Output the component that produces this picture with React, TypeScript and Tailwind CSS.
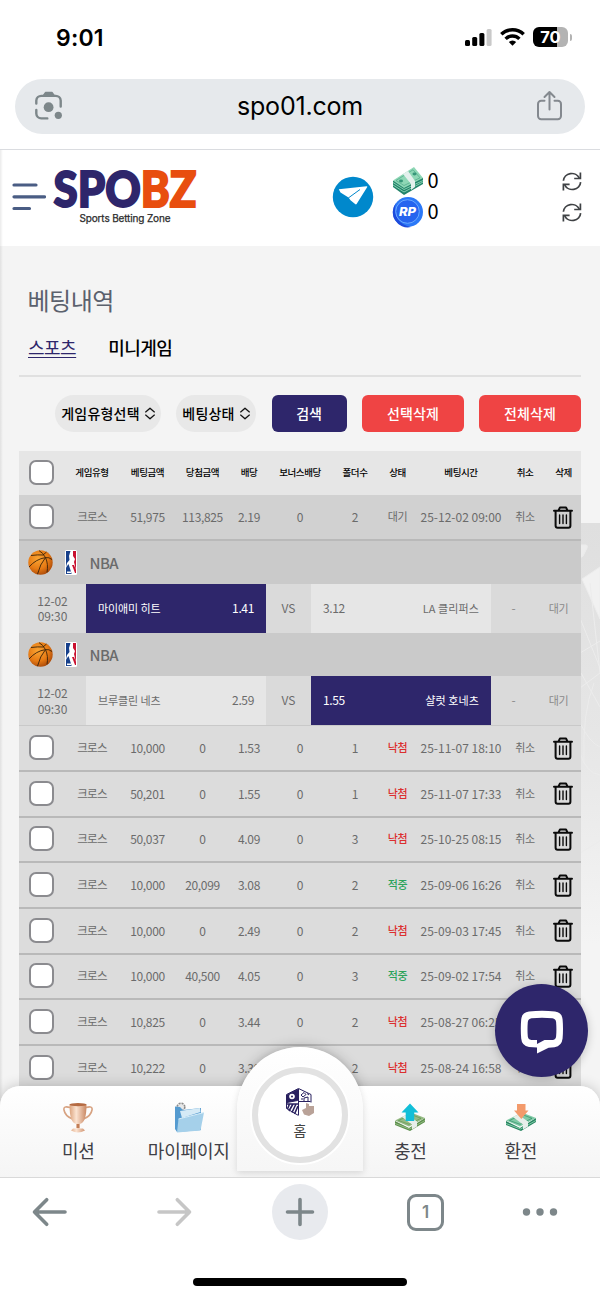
import { ReactNode } from 'react';

type Bet = { amount: string; win: string; odds: string; folders: number; status: string; time: string };
type Match = { home: string; homeOdds: string; away: string; awayOdds: string; picked: 'home' | 'away' };

const openBet: Bet = { amount: '51,975', win: '113,825', odds: '2.19', folders: 2, status: '대기', time: '25-12-02 09:00' };

const matches: Match[] = [
  { home: '마이애미 히트', homeOdds: '1.41', away: 'LA 클리퍼스', awayOdds: '3.12', picked: 'home' },
  { home: '브루클린 네츠', homeOdds: '2.59', away: '샬럿 호네츠', awayOdds: '1.55', picked: 'away' },
];

const bets: Bet[] = [
  { amount: '10,000', win: '0', odds: '1.53', folders: 1, status: '낙첨', time: '25-11-07 18:10' },
  { amount: '50,201', win: '0', odds: '1.55', folders: 1, status: '낙첨', time: '25-11-07 17:33' },
  { amount: '50,037', win: '0', odds: '4.09', folders: 3, status: '낙첨', time: '25-10-25 08:15' },
  { amount: '10,000', win: '20,099', odds: '3.08', folders: 2, status: '적중', time: '25-09-06 16:26' },
  { amount: '10,000', win: '0', odds: '2.49', folders: 2, status: '낙첨', time: '25-09-03 17:45' },
  { amount: '10,000', win: '40,500', odds: '4.05', folders: 3, status: '적중', time: '25-09-02 17:54' },
  { amount: '10,825', win: '0', odds: '3.44', folders: 2, status: '낙첨', time: '25-08-27 06:25' },
  { amount: '10,222', win: '0', odds: '3.39', folders: 2, status: '낙첨', time: '25-08-24 16:58' },
];

const columns = ['게임유형', '베팅금액', '당첨금액', '배당', '보너스배당', '폴더수', '상태', '베팅시간', '취소', '삭제'];
const GRID = 'grid grid-cols-[44px_58px_53px_57px_36px_66px_44px_41px_86px_42px_35px] items-center text-center whitespace-nowrap';

export default function App() {
  return (
    <div className="w-[600px] h-[1298px] overflow-hidden flex flex-col bg-white font-['Noto_Sans_CJK_KR',sans-serif]">
      <StatusBar />
      <AddressBar />
      <main className="relative h-[1027px] shrink-0 overflow-hidden bg-[#f4f4f4]">
        <Backdrop />
        <SiteHeader />
        <History />
        <div className="absolute inset-y-0 left-0 w-[3px] bg-linear-to-r from-black/8 to-transparent" />
        <ChatButton />
        <SiteNav />
      </main>
      <BrowserBar />
    </div>
  );
}

function StatusBar() {
  return (
    <div className="h-[78px] shrink-0 flex items-start justify-between pl-[56px] pr-[28px] font-['Inter',sans-serif]">
      <p className="mt-[24px] text-[23px] leading-[28px] font-semibold tracking-[0.2px]">9:01</p>
      <div className="mt-[27px] flex items-center">
        <svg width="27" height="20" viewBox="0 0 27 20">
          <rect x="0" y="13" width="5" height="6" rx="1.5" />
          <rect x="7.2" y="10" width="5" height="9" rx="1.5" />
          <rect x="14.4" y="6" width="5" height="13" rx="1.5" />
          <rect x="21.6" y="2" width="5" height="17" rx="1.5" fill="#c9c9c9" />
        </svg>
        <svg className="ml-[8px]" width="25" height="20" viewBox="0 0 25 20" fill="none" stroke="#000" strokeWidth="3.4">
          <path d="M1.3 7.3a16 16 0 0 1 22.4 0" />
          <path d="M5.6 11.9a9.8 9.8 0 0 1 13.8 0" />
          <path d="M8.8 15.1a5.3 5.3 0 0 1 7.4 0L12.5 18.8Z" fill="#000" stroke="none" />
        </svg>
        <div className="ml-[8px] w-[35px] h-[20px] rounded-[6px] bg-linear-to-r from-black from-70% to-[#b3b3b3] to-70% text-white text-[16.5px] leading-[20px] font-bold text-center">70</div>
        <div className="ml-[1.5px] w-[2.5px] h-[7px] rounded-r-full bg-[#b3b3b3]" />
      </div>
    </div>
  );
}

function AddressBar() {
  return (
    <div className="h-[72px] shrink-0 px-[15px] border-b border-[#dadce0]">
      <div className="relative mt-[0.5px] h-[55px] rounded-full bg-[#e6e9ec] flex items-center justify-between pl-[19px] pr-[22.5px]">
        <svg width="30" height="30" viewBox="0 0 30 30" fill="none" stroke="#7d878a" strokeWidth="2.4" strokeLinecap="round">
          <path d="M2.3 12.5V9.5a5 5 0 0 1 5-4.6h14.4a5 5 0 0 1 5 4.6v6" />
          <path d="M2.3 19v3.5a5 5 0 0 0 5 4.9h6" />
          <path d="M9.5 4.5 11.5 1.6h6.6l2 2.9z" fill="#7d878a" strokeWidth="1.5" strokeLinejoin="round" />
          <circle cx="14.6" cy="16.2" r="4.9" fill="#7d878a" stroke="none" />
          <circle cx="24.3" cy="24.3" r="3.6" fill="#7d878a" stroke="none" />
        </svg>
        <p className="absolute inset-x-0 text-center font-['Inter',sans-serif] text-[25px] leading-[30px] tracking-[-0.2px] text-black">spo01.com</p>
        <svg width="27" height="32" viewBox="0 0 27 32" fill="none" stroke="#84898f" strokeWidth="2" strokeLinecap="round" strokeLinejoin="round">
          <path d="M8.5 10.8H5.2A3.2 3.2 0 0 0 2 14v12a3.2 3.2 0 0 0 3.2 3.2h16.6A3.2 3.2 0 0 0 25 26V14a3.2 3.2 0 0 0-3.2-3.2h-3.3" />
          <path d="M13.5 19.5V2.2M8.5 7l5-5 5 5" />
        </svg>
      </div>
    </div>
  );
}

function SiteHeader() {
  return (
    <header className="relative h-[96px] bg-white flex items-start pl-[12px] pr-[18px]">
      <svg className="mt-[33px]" width="34" height="28" viewBox="0 0 34 28" stroke="#4a5d84" strokeWidth="3.2" strokeLinecap="round">
        <path d="M2 2h22M2 13.8h30.5M2 25.5h15.5" />
      </svg>
      <svg className="ml-[5px]" width="150" height="80" viewBox="0 0 150 80">
        <text x="2.5" y="56.8" fontFamily="Lato, sans-serif" fontWeight="900" fontSize="50" strokeWidth="2" textLength="143" lengthAdjust="spacingAndGlyphs">
          <tspan fill="#2e266b" stroke="#2e266b">SPO</tspan>
          <tspan fill="#e84e0f" stroke="#e84e0f">BZ</tspan>
        </text>
        <text x="28.5" y="71.5" fontFamily="Inter, sans-serif" fontSize="10" fill="#2b2b2b" stroke="#2b2b2b" strokeWidth="0.25" textLength="91">Sports Betting Zone</text>
      </svg>
      <svg className="mt-[26px] ml-[131px]" width="42" height="42" viewBox="0 0 42 42">
        <circle cx="21" cy="21" r="20.2" fill="#0088cc" />
        <path d="M6.8 13.2 34.6 10.3q1.200 0 .5 1L24.600 28q-.600.900-1.500.1L18.500 24.300 16.500 21.500 8.500 16.500Z" fill="#fff" />
        <path d="M16.300 22 28 13.500" stroke="#0088cc" strokeWidth="1" />
      </svg>
      <div className="mt-[16px] ml-[18px] flex flex-col">
        <Balance icon={<CashIcon />} />
        <Balance icon={<PointIcon />} />
      </div>
      <div className="ml-auto mt-[22px] flex flex-col gap-[12px]">
        <RefreshIcon />
        <RefreshIcon />
      </div>
    </header>
  );
}

function Balance({ icon }: { icon: ReactNode }) {
  return (
    <div className="h-[31px] flex items-start">
      {icon}
      <span className="ml-[3.5px] text-[20px] leading-[27px] text-black">0</span>
    </div>
  );
}

function CashIcon() {
  return (
    <svg width="32" height="31" viewBox="0 0 32 31">
      <path d="M1 15v6l11 8 19-11v-6Z" fill="#23836a" />
      <path d="m1 19 11 7 19-10M1 16.5l11 7 19-9" fill="none" stroke="#83cfae" strokeWidth="1" />
      <path d="M1 14.5 22 1l9 11-19 10Z" fill="#8ed7b5" />
      <path d="M4 14.5 21 3.8l7 8-16 7.7Z" fill="none" stroke="#4ca886" strokeWidth=".7" />
      <ellipse cx="9" cy="15" rx="2" ry="1.4" fill="#37977a" />
      <ellipse cx="22.5" cy="8" rx="2" ry="1.4" fill="#37977a" />
      <path d="m11 8 5-3 7 10v6l-4 3v-6Z" fill="#e3f0ec" />
    </svg>
  );
}

function PointIcon() {
  return (
    <svg width="32" height="31" viewBox="0 0 32 31">
      <circle cx="16" cy="15" r="15" fill="#2b78f7" />
      <path d="M4 6a15 15 0 0 0 15 24A18 18 0 0 1 4 6Z" fill="#1d4bdc" />
      <circle cx="15.5" cy="14.5" r="11.8" fill="#2564ef" stroke="#6aa8ff" strokeWidth="1" />
      <text x="7" y="19" fontFamily="Inter, sans-serif" fontWeight="800" fontStyle="italic" fontSize="12" fill="#fff" textLength="17" lengthAdjust="spacingAndGlyphs">RP</text>
    </svg>
  );
}

function RefreshIcon() {
  return (
    <svg width="20" height="19" viewBox="0 0 20 19" fill="none" stroke="#3f4245" strokeWidth="1.7">
      <path d="M1.4 8.7A8.300 7.800 0 0 1 17.300 6.200M18.600 10.100A8.300 7.800 0 0 1 2.700 12.800" />
      <path d="M18.400.5v6h-6.200M1.400 18.400v-6h6.200" />
    </svg>
  );
}

// Faded stadium photo, visible only to the right of the table
function Backdrop() {
  return (
    <div className="absolute top-[373px] right-0 w-[40px] h-[420px] bg-linear-to-b from-[#dfdfdf] via-[#e6e6e6] to-[#f4f4f4]">
      <svg width="40" height="420" viewBox="0 0 40 420" fill="none" stroke="#ececec">
        <path d="M20 22h6q2 0 1 3l-4 8-3 2z" fill="#ededed" />
        <path d="M22 56 40 44v52Z" fill="#f1f1f1" />
        <path d="m20 95 20 50M20 130l20-12M21 150l19 34M20 165l20-15M30 60l10 90M20 200q10 20 20 24M24 240q-2-50 10-80M20 230q6 20 20 22M20 330l20-12" />
      </svg>
    </div>
  );
}

function History() {
  return (
    <section className="relative w-[562px] ml-[19px]">
      <h1 className="pt-[38.5px] pl-[8.5px] text-[24px] leading-[30px] font-normal tracking-[-0.5px] text-[#5b616d]">베팅내역</h1>
      <div className="mt-[17.5px] h-[45px] flex gap-[32px] pl-[9px] border-b-2 border-[#e0e0e0] text-[18px] leading-[30px] font-medium tracking-[-0.5px] text-black">
        <span className="text-[#2e266b] font-normal underline underline-offset-2 decoration-1">스포츠</span>
        <span>미니게임</span>
      </div>
      <div className="mt-[18px] flex justify-end text-[14px] leading-[37px] font-medium whitespace-nowrap">
        <Select label="게임유형선택" className="w-[106px]" />
        <Select label="베팅상태" className="w-[80px] ml-[15px]" />
        <button className="ml-[15.5px] w-[75px] h-[37px] rounded-[6px] bg-[#2e266b] text-white tracking-[-0.2px]">검색</button>
        <button className="ml-[15.5px] w-[102px] h-[37px] rounded-[6px] bg-[#ef4444] text-white tracking-[0.1px]">선택삭제</button>
        <button className="ml-[15px] w-[102px] h-[37px] rounded-[6px] bg-[#ef4444] text-white tracking-[0.1px]">전체삭제</button>
      </div>
      <div className="mt-[18.5px]">
        <div className={`${GRID} h-[44.5px] pb-[1px] bg-[#e6e6e6] text-[9.5px] font-medium tracking-[-0.4px] text-black`}>
          <Checkbox />
          {columns.map((c) => <span key={c}>{c}</span>)}
        </div>
        <BetRow bet={openBet} open />
        {matches.map((m) => <MatchRows key={m.home} match={m} />)}
        <div className="h-[1px] bg-[#c9c9c9]" />
        {bets.map((b) => <BetRow key={b.time} bet={b} />)}
      </div>
    </section>
  );
}

function Select({ label, className }: { label: string; className: string }) {
  return (
    <div className={`${className} h-[37px] rounded-full bg-[#e8e8e8] flex items-center justify-center gap-[5px] text-black tracking-[0.2px]`}>
      {label}
      <svg width="10" height="13" viewBox="0 0 10 13" fill="none" stroke="#111" strokeWidth="1.4" strokeLinejoin="round">
        <path d="M.3 5.300 5 1.300l4.700 4M.3 7.700 5 11.700l4.700-4" />
      </svg>
    </div>
  );
}

function Checkbox() {
  return <span className="ml-[10px] size-[25px] rounded-[7px] border-2 border-[#8b8b8f] bg-white" />;
}

function BetRow({ bet, open }: { bet: Bet; open?: boolean }) {
  const statusColor = bet.status === '낙첨' ? 'text-[#dc2f2f] font-medium' : bet.status === '적중' ? 'text-[#2ba35a] font-medium' : '';
  return (
    <div className={`${GRID} ${open ? 'h-[46px] bg-[#d1d1d1]' : 'h-[45.65px] bg-[#dcdcdc]'} pb-[1px] border-b-2 border-[#b9b9b9] text-[12px] leading-[17px] tracking-[-0.35px] text-[#6b6b6b]`}>
      <Checkbox />
      <span className="text-[11.5px] tracking-[-0.8px]">크로스</span>
      <span>{bet.amount}</span>
      <span>{bet.win}</span>
      <span>{bet.odds}</span>
      <span>0</span>
      <span>{bet.folders}</span>
      <span className={`${statusColor} text-[11px]`}>{bet.status}</span>
      <span className="tracking-[0px]">{bet.time}</span>
      <span className="text-[11px]">취소</span>
      <TrashIcon />
    </div>
  );
}

function TrashIcon() {
  return (
    <svg className="ml-[7px] mt-[1px]" width="20" height="23" viewBox="0 0 20 23" fill="none" stroke="#0b0b0b" strokeWidth="2" strokeLinecap="round" strokeLinejoin="round">
      <path d="M1 4.800h18M2.600 5v14.800a2 2 0 0 0 2 2h10.800a2 2 0 0 0 2-2V5M5.500 4.500 7 1.400h6l1.500 3.100" />
      <path d="M6.600 9v8.600M10 9v8.600M13.400 9v8.600" strokeWidth="1.400" />
    </svg>
  );
}

function MatchRows({ match }: { match: Match }) {
  const picked = 'bg-[#2e266b] text-white';
  const plain = 'bg-[#e6e6e6]';
  return (
    <>
      <div className="h-[43.2px] bg-[#cacaca] flex items-center pl-[8.5px]">
        <BasketballIcon />
        <NbaIcon />
        <span className="ml-[13px] text-[15px] leading-[22px] font-medium tracking-[-0.6px] text-[#6b6b6b]">NBA</span>
      </div>
      <div className="h-[49px] bg-[#dadada] grid grid-cols-[67px_180px_45px_180px_45px_45px] items-stretch text-center text-[12px] leading-[48px] tracking-[-0.35px] text-[#6b6b6b] whitespace-nowrap">
        <span className="pt-[9px] leading-[15.3px] tracking-[-0.1px]">12-02<br />09:30</span>
        <span className={`${match.picked === 'home' ? picked : plain} flex justify-between px-[12px]`}>
          <span className="text-[11px] tracking-[-0.1px]">{match.home}</span>
          <span>{match.homeOdds}</span>
        </span>
        <span className="tracking-[0.1px]">VS</span>
        <span className={`${match.picked === 'away' ? picked : plain} flex justify-between px-[12px]`}>
          <span>{match.awayOdds}</span>
          <span className="text-[11px] tracking-[0.1px]">{match.away}</span>
        </span>
        <span className="text-[#8a8a8a]">-</span>
        <span className="text-[11px] text-[#8a8a8a]">대기</span>
      </div>
    </>
  );
}

function BasketballIcon() {
  return (
    <svg width="25" height="25" viewBox="0 0 25 25" fill="none" stroke="#3b2209" strokeWidth=".9">
      <defs>
        <radialGradient id="ball" cx=".4" cy=".35" r=".7">
          <stop stopColor="#f9a534" />
          <stop offset=".6" stopColor="#e67a14" />
          <stop offset="1" stopColor="#a8480a" />
        </radialGradient>
      </defs>
      <circle cx="12.5" cy="12.5" r="12.2" fill="url(#ball)" stroke="none" />
      <path d="M11 .6q4 2 6.500 7M17.500 7.600Q8 9 1 17M17.500 7.600Q12 14 9.500 24.200M17.500 7.600Q20.500 14 19 22.500M17.500 7.600Q21 7 24 9.500M3 5.500Q10 4.500 15.500 5M18.500 2l-3.500 3" />
    </svg>
  );
}

function NbaIcon() {
  return (
    <svg className="ml-[12px]" width="12" height="25" viewBox="0 0 12 25">
      <rect width="12" height="25" rx="1.5" fill="#fff" />
      <path d="M1 1h4.500L4 6l.5 4L2 13l-1 4Z" fill="#17408b" />
      <path d="M8 1h3v20L10 16 9 12l1-3-2-3Z" fill="#c9102f" />
      <path d="M1 17.500 3.500 14l1 3 2 6.500V24H1Z" fill="#17408b" />
      <path d="m7 15 3 8h1v-3L9 15Z" fill="#c9102f" />
      <path d="M2 22.300h4" stroke="#fff" strokeWidth="1.600" />
    </svg>
  );
}

function ChatButton() {
  return (
    <button className="absolute top-[834px] left-[495px] size-[93px] rounded-full bg-[#2e266b] shadow-[0_2px_10px_rgba(0,0,0,0.2)] flex items-center justify-center">
      <svg className="mt-[2px]" width="44" height="44" viewBox="0 0 44 44">
        <path fillRule="evenodd" fill="#fff" d="M9 1.600Q22 0 35 1.600q7 .8 7.600 8 .8 9 0 19-.8 7.500-8 8.600l-6 .6L17 43.500V37.500l-8-.6Q1.800 36 1.200 28.600q-.8-10 0-19Q1.800 2.400 9 1.600ZM11.500 8.300q-3.300.4-3.700 3.700-.6 7.500 0 14.500.4 3 3.500 3.500h5.700v4l7.500-4h8q3.200-.4 3.600-3.500.6-7 0-14.500-.4-3.300-3.600-3.700-10.500-1-21 0Z" />
      </svg>
    </button>
  );
}

function SiteNav() {
  return (
    <nav className="absolute top-[936px] inset-x-0 h-[91px]">
      <div className="absolute left-[237px] -top-[39px] w-[126px] h-[124px] rounded-t-[63px] shadow-[0_0_14px_rgba(0,0,0,0.22)]" />
      <div className="relative h-full rounded-t-[20px] bg-linear-to-b from-white to-[#f5f5f5] shadow-[0_0_14px_rgba(0,0,0,0.2)] flex pl-[23px] pr-[24px]">
        <NavItem label="미션" icon={<TrophyIcon />} />
        <NavItem label="마이페이지" icon={<FolderIcon />} />
        <span className="w-[111px]" />
        <NavItem label="충전" icon={<DepositIcon />} />
        <NavItem label="환전" icon={<WithdrawIcon />} />
      </div>
      <div className="absolute left-[237px] -top-[39px] w-[126px] h-[124px] rounded-t-[63px] bg-linear-to-b from-white to-[#f6f6f6] shadow-[0_2px_7px_rgba(0,0,0,0.13)] flex justify-center pt-[20px]">
        <div className="size-[96px] rounded-full border-[6px] border-[#e2e2e2] bg-white ring-2 ring-white flex flex-col items-center">
          <HomeIcon />
          <span className="mt-[1px] text-[14px] leading-[22px] text-[#444]">홈</span>
        </div>
      </div>
    </nav>
  );
}

function NavItem({ label, icon }: { label: string; icon: ReactNode }) {
  return (
    <div className="w-[110.5px] flex flex-col items-center pt-[16px] whitespace-nowrap">
      {icon}
      <span className="mt-[3px] text-[18px] leading-[28px] tracking-[-0.2px] text-[#3f3f46]">{label}</span>
    </div>
  );
}

function HomeIcon() {
  return (
    <svg className="mt-[14px]" width="30" height="31" viewBox="0 0 30 31" fill="none" stroke="#28205f" strokeWidth="1">
      <path d="M1.500 7.500 13.500 1.500 26 7.500v8M1.500 7.500v14L13.500 28.500" />
      <path d="M2 8 12.500 2.500v11L2 15.500Z" fill="#28205f" />
      <path d="M13.500 2v26" />
      <circle cx="7" cy="9.500" r="2.800" fill="#fff" stroke="none" />
      <circle cx="7" cy="9.500" r="1" fill="#28205f" stroke="none" />
      <path d="M2 17h11M4.500 17 2.500 22M8 17l-4 7M11 17l-4 8.500M13 19l-3.500 8" strokeWidth="1.600" />
      <path d="M14 14.500h11.500M16 8l3-2.500 2 2L18 10zM19 14v-3l4-1v4M22 6.500l2 1.500M16 12h2" />
      <path d="m21 16 3 1v2h5v7l-5 3-5-1.500-2-4.500 4-2Z" fill="#b9a298" stroke="none" />
    </svg>
  );
}

function TrophyIcon() {
  return (
    <svg width="30" height="31" viewBox="0 0 30 31">
      <defs>
        <linearGradient id="cup">
          <stop stopColor="#dca37d" />
          <stop offset=".4" stopColor="#fbe3d1" />
          <stop offset="1" stopColor="#c98762" />
        </linearGradient>
      </defs>
      <path d="M7 5.500Q0 3.500 1 8q1 6 8.500 9M23 5.500q7-2 6 2.500-1 6-8.500 9" fill="none" stroke="#d7a281" strokeWidth="1.600" />
      <path d="M6.500 2.500q0 19 7 19.500v4.500H10l-2 2q7 4 14 0l-2-2h-3.500V22q7-.5 7-19.500Z" fill="url(#cup)" />
      <ellipse cx="15" cy="2.600" rx="8.500" ry="1.700" fill="#b56a42" />
      <path d="M13.500 22h3v4h-3z" fill="#c27d55" />
    </svg>
  );
}

function FolderIcon() {
  return (
    <svg width="30" height="31" viewBox="0 0 30 31">
      <circle cx="7" cy="5" r="3.800" fill="#e8e8e8" stroke="#8c8c8c" strokeWidth="1.600" strokeDasharray="2 1" />
      <path d="M1 4.500 6 5l3 3 18-2v22L3 30 1 27Z" fill="#559bd0" />
      <path d="m6 9 20-3 .5 4L8 16Z" fill="#d5eaf6" />
      <path d="M4.500 17 30 10.500l-3.500 18L3 30.500Z" fill="#a5d0ea" />
      <path d="M4.500 17 30 10.500" stroke="#d8edf8" strokeWidth="1" />
    </svg>
  );
}

function CashStack({ top, side }: { top: string; side: string }) {
  return (
    <>
      <path d="M0 19v4l15 6 15-9v-4L14 26Z" fill={side} />
      <path d="m0 21.500 14.500 5.500L30 18.500" fill="none" stroke={top} />
      <path d="m0 18.500 16-8L30 16 14 24.500Z" fill={top} />
      <path d="m3.500 18.500 12.500-6 10 3.800-12 6Z" fill="none" stroke={side} strokeWidth=".6" />
      <path d="m7 15 5-2.500L22 19.500v5l-5 3v-5Z" fill="#e7eeea" />
    </>
  );
}

function DepositIcon() {
  return (
    <svg width="30" height="31" viewBox="0 0 30 31">
      <CashStack top="#94ba83" side="#5d904e" />
      <path d="m15 1.500 8.500 9h-4.300V19h-8.500v-8.500H6.500Z" fill="#12bfd8" />
    </svg>
  );
}

function WithdrawIcon() {
  return (
    <svg width="30" height="31" viewBox="0 0 30 31">
      <CashStack top="#7fcaa5" side="#288562" />
      <path d="M11 2h8.500v6.500h3L15.300 17 8 8.500h3Z" fill="#f39a6b" />
    </svg>
  );
}

function BrowserBar() {
  return (
    <div className="relative flex-1 border-t border-[#d9d9d9] bg-white">
      <div className="h-[67px] flex items-center pl-[30.5px] text-[#7d878a]">
        <svg width="37" height="30" viewBox="0 0 37 30" fill="none" stroke="currentColor" strokeWidth="3.600" strokeLinecap="round" strokeLinejoin="round">
          <path d="M34 15H3.500M15.700 2.700 3.500 15l12.200 12.300" />
        </svg>
        <svg className="ml-[88.500px]" width="37" height="30" viewBox="0 0 37 30" fill="none" stroke="#c6c6c6" strokeWidth="3.600" strokeLinecap="round" strokeLinejoin="round">
          <path d="M3 15h30.500M21.300 2.700 33.500 15 21.300 27.300" />
        </svg>
        <div className="ml-[79px] size-[56px] rounded-full bg-[#e8eaee] flex items-center justify-center">
          <svg width="30" height="30" viewBox="0 0 30 30" stroke="currentColor" strokeWidth="3.600" strokeLinecap="round">
            <path d="M15 2.500v25M2.500 15h25" />
          </svg>
        </div>
        <div className="ml-[79px] mt-[1px] size-[37px] rounded-[9px] border-[3px] border-[#7d878a] font-['Inter',sans-serif] text-[17px] leading-[31px] font-semibold text-center">1</div>
        <svg className="ml-[78px]" width="36" height="10" viewBox="0 0 36 10" fill="currentColor">
          <circle cx="4.500" cy="5" r="3.700" />
          <circle cx="18" cy="5" r="3.700" />
          <circle cx="31.500" cy="5" r="3.700" />
        </svg>
      </div>
      <div className="mt-[33px] mx-auto w-[214px] h-[8px] rounded-full bg-black" />
    </div>
  );
}
